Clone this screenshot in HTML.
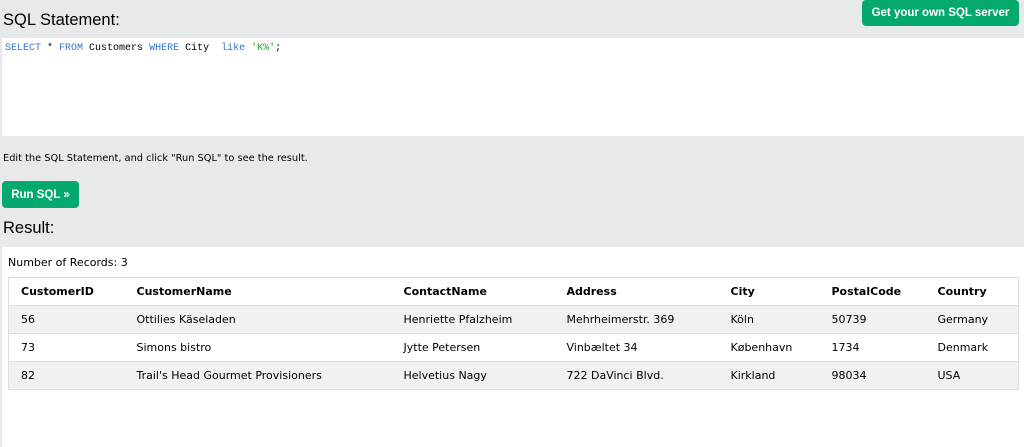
<!DOCTYPE html>
<html><head><meta charset="utf-8"><style>
body{margin:0;width:1024px;height:443px;background:#e7e9eb;position:relative;overflow:hidden;font-family:"DejaVu Sans","Liberation Sans",sans-serif;color:#000}
.a{position:absolute}
h2{margin:0;font:normal 16.5px "Liberation Sans",sans-serif;position:absolute}
.btn{position:absolute;background:#04aa6d;color:#fff;font:bold 11.5px "Liberation Sans",sans-serif;border-radius:4px;display:flex;align-items:center;justify-content:center}
.ed{left:2px;top:38px;width:1022px;height:98px;background:#fff}
.code{left:5px;top:43px;font:10px "Liberation Mono","DejaVu Sans Mono",monospace;white-space:pre}
.k{color:#3674c4}.s{color:#22a022}
.res{left:2px;top:247px;width:1022px;height:200px;background:#fff}
table{position:absolute;left:8px;top:277px;width:1011px;border-collapse:collapse;border:1px solid #ddd;font-size:11px}
td,th{height:27px;padding:0;text-align:left;border-bottom:1px solid #ddd}
th{font-weight:bold}
tr.g{background:#f1f1f1}
</style></head><body>
<h2 style="left:3px;top:11px">SQL Statement:</h2>
<div class="btn" style="left:862px;top:0;width:157px;height:26px">Get your own SQL server</div>
<div class="a ed"></div>
<div class="a code"><span class="k">SELECT</span> * <span class="k">FROM</span> Customers <span class="k">WHERE</span> City  <span class="k">like</span> <span class="s">'K%'</span>;</div>
<div class="a" style="left:3px;top:153px;font-size:9.8px">Edit the SQL Statement, and click "Run SQL" to see the result.</div>
<div class="btn" style="left:2px;top:181px;width:77px;height:27px">Run SQL »</div>
<h2 style="left:3px;top:219px">Result:</h2>
<div class="a res"></div>
<div class="a" style="left:8px;top:256px;font-size:11px">Number of Records: 3</div>
<table>
<colgroup><col style="width:128px"><col style="width:267px"><col style="width:163px"><col style="width:164px"><col style="width:101px"><col style="width:106px"><col></colgroup>
<tr><th style="padding-left:12px">CustomerID</th><th>CustomerName</th><th>ContactName</th><th>Address</th><th>City</th><th>PostalCode</th><th>Country</th></tr>
<tr class="g"><td style="padding-left:12px">56</td><td>Ottilies Käseladen</td><td>Henriette Pfalzheim</td><td>Mehrheimerstr. 369</td><td>Köln</td><td>50739</td><td>Germany</td></tr>
<tr><td style="padding-left:12px">73</td><td>Simons bistro</td><td>Jytte Petersen</td><td>Vinbæltet 34</td><td>København</td><td>1734</td><td>Denmark</td></tr>
<tr class="g"><td style="padding-left:12px">82</td><td>Trail's Head Gourmet Provisioners</td><td>Helvetius Nagy</td><td>722 DaVinci Blvd.</td><td>Kirkland</td><td>98034</td><td>USA</td></tr>
</table>
</body></html>
